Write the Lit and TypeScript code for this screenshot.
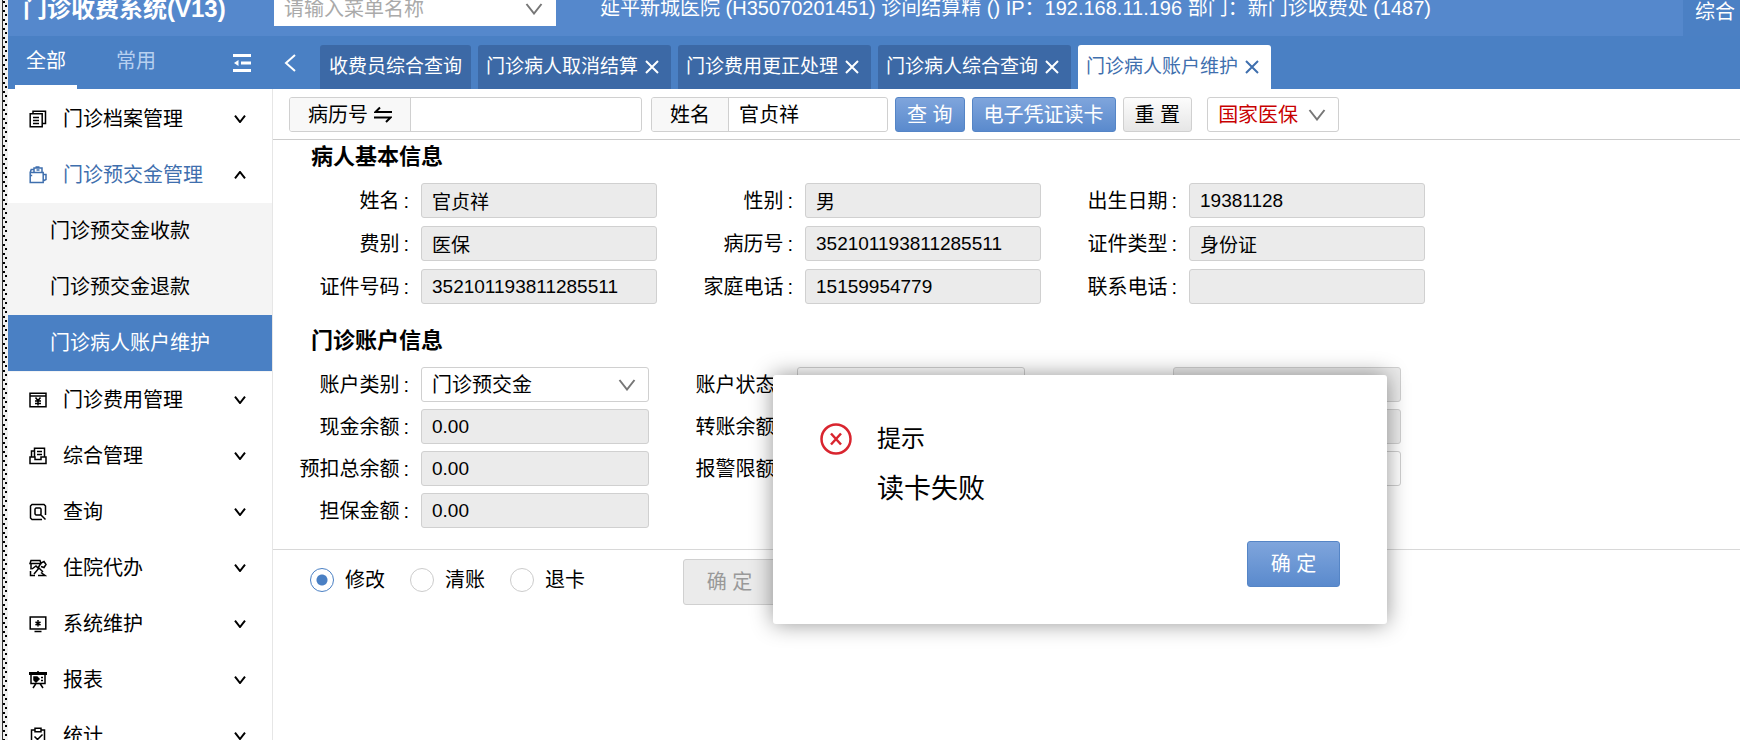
import { LitElement, html, css, svg, nothing } from "lit";
import { customElement, state } from "lit/decorators.js";
import { classMap } from "lit/directives/class-map.js";

const icons: Record<string, unknown> = {
  files: svg`<path d="M4 3.500V1.200h12.500v12.300h-3M1.200 3.800h12v13h-12zM4 7.500h6M4 10.500h6M4 13.500h6"/>`,
  wallet: svg`<path d="M1.200 6.500h13v10h-13zM1.200 6.500l1-3h3M5 6V2h8v4M7.500 4h3M1.200 9.500h2M14 8.500h3v5l-3 1.500M6.500 1h4"/>`,
  fee: svg`<path d="M1 2.200h16v13.600H1zM1 5h16M6.500 6.500l2.500 3 2.500-3M6 10h6M6 12.500h6M9 9.500v5"/>`,
  inbox: svg`<path d="M1 10h5v2.500h6V10h5v6.500H1zM2.500 10V4h3M5.500 10V1.200h10V10M8 4.500h5M8 7.500h5"/>`,
  search: svg`<path d="M13 16.500H3l-1.500-1.500V3L3 1.500h12L16.500 3v9M11 5H7L6 6v5l1 1h4l1-1V6zM12 12l4.500 4.500"/>`,
  agent: svg`<path d="M2 1.500h9l1 3H1zM2 4.500v6M1.500 12v4.500H6M3 10l4-3 2 2 3-5 3-1.500 2 3-2 3-3-1M5 15l5-6 4 4M9 16.500h7l-4-3"/>`,
  monitor: svg`<path d="M1.200 2h15.600v12H1.200zM5.500 16.500h7M9 5v6.500M6.500 7l5 3M11.500 7l-5 3"/>`,
  board: svg`<path d="M0 2.500h18" stroke-width="3"/><path d="M2 3v9.500h14V3M7 12.500l-3 4.500M11 12.500l3 4.500M12 6.500h2M12 9.500h2M9 0v2"/><path fill="currentColor" d="M5 6h3l2 2-3 3-2-2z"/>`,
  clipboard: svg`<path d="M6 3H2.500v14h13V3H12M6 1.300h6v3.400H6zM5.500 9.500l3 3 5-5"/>`,
};

const menus = [
  { icon: "files", label: "门诊档案管理" },
  {
    icon: "wallet",
    label: "门诊预交金管理",
    children: ["门诊预交金收款", "门诊预交金退款", "门诊病人账户维护"],
  },
  { icon: "fee", label: "门诊费用管理" },
  { icon: "inbox", label: "综合管理" },
  { icon: "search", label: "查询" },
  { icon: "agent", label: "住院代办" },
  { icon: "monitor", label: "系统维护" },
  { icon: "board", label: "报表" },
  { icon: "clipboard", label: "统计" },
];

const tabs = ["收费员综合查询", "门诊病人取消结算", "门诊费用更正处理", "门诊病人综合查询", "门诊病人账户维护"];

const patient: [string, string][] = [
  ["姓名", "官贞祥"],
  ["性别", "男"],
  ["出生日期", "19381128"],
  ["费别", "医保"],
  ["病历号", "352101193811285511"],
  ["证件类型", "身份证"],
  ["证件号码", "352101193811285511"],
  ["家庭电话", "15159954779"],
  ["联系电话", ""],
];

const chevron = (cls: string) => html`<svg class="chev ${cls}" viewBox="0 0 18 12" aria-hidden="true">
  <path d="M1.500 1L9 10.500 16.500 1" />
</svg>`;

@customElement("app-root")
export class AppRoot extends LitElement {
  static styles = css`
    :host {
      display: flex;
      height: 100vh;
      overflow: hidden;
      background: #fff;
      color: #000;
      font: 20px/28px "Liberation Sans", "Noto Sans CJK SC", sans-serif;
    }
    * { box-sizing: border-box; }
    button, input, select { font: inherit; color: inherit; margin: 0; border-radius: 3px; }
    button { border: 0; padding: 0; background: none; white-space: nowrap; cursor: pointer; }
    a { color: inherit; text-decoration: none; white-space: nowrap; }
    svg { fill: none; stroke: currentColor; flex: none; }
    .strip {
      flex: none;
      width: 8px;
      border-left: 2px solid #eee;
      background:
        linear-gradient(#333, #333) 0 0 / 1px 100% no-repeat,
        radial-gradient(circle at 2px 2px, #000 1px, transparent 1px) 0 0 / 6px 9px,
        radial-gradient(circle at 4px 6px, #000 1px, transparent 1px) 0 0 / 6px 9px,
        #f0f0f0;
    }
    .app { flex: 1; min-width: 0; display: flex; flex-direction: column; }

    .header {
      flex: none;
      display: flex;
      align-items: flex-end;
      height: 36px;
      background: #5588cc;
      color: #fff;
      white-space: nowrap;
    }
    .title { width: 266px; margin: 0 0 10px; padding-left: 15px; font-size: 24px; line-height: 35px; font-weight: 700; }
    .pick { display: grid; align-items: center; }
    .pick > * { grid-area: 1 / 1; }
    .pick select {
      appearance: none;
      width: 100%;
      height: 35px;
      padding: 0 10px;
      border: 1px solid #d0d0d0;
      background: #fff;
    }
    .chev { width: 18px; height: 12px; color: #777; stroke-width: 2; justify-self: end; margin-right: 13px; pointer-events: none; }
    .find { width: 282px; margin-bottom: 10px; color: #aaa; }
    .find select { border: 0; border-radius: 0; }
    .info { margin: 0 auto 10px 44px; line-height: 35px; }
    .mode { width: 57px; height: 48px; padding-left: 12px; border-radius: 0; background: #4b80c4; text-align: left; overflow: hidden; }

    .nav { flex: none; display: flex; height: 53px; background: #4a80c4; color: #fff; }
    .scope { flex: none; display: flex; align-items: stretch; width: 266px; padding-left: 7px; }
    .scope button { width: 62px; border-radius: 0; margin-right: 28px; border-bottom: 4px solid transparent; color: #b7d0f0; }
    .scope .on { border-color: #fff; color: #fff; }
    .fold { width: 18px; height: 18px; margin: 18px 0 0 38px; stroke-width: 3; }
    .back { flex: none; width: 12px; height: 18px; margin: 18px 24px 0 10px; stroke-width: 2; }
    .tabs { display: flex; gap: 7px; padding-top: 9px; min-width: 0; }
    .tab {
      display: flex;
      align-items: center;
      gap: 7px;
      padding: 0 12px 0 8px;
      border-radius: 3px 3px 0 0;
      background: #3c69a6;
      font-size: 19px;
    }
    .tab:first-child { padding: 0 9px; }
    .tab.on { background: #fff; color: #3f6fae; }
    .tab button { display: flex; color: inherit; }
    .cross { width: 14px; height: 16px; stroke-width: 2; }

    .body { flex: 1; display: flex; min-height: 0; }
    .side { flex: none; width: 265px; padding-top: 2px; border-right: 1px solid #e6e6e6; overflow: hidden; }
    .item { display: flex; align-items: center; width: 100%; height: 56px; padding: 0 26px 0 21px; text-align: left; }
    .item svg { width: 18px; height: 18px; stroke-width: 1.500; }
    .item span { flex: 1; padding-left: 16px; }
    .item .chev { width: 12px; height: 8px; margin: 0; color: #000; stroke-width: 3; }
    .item .up { transform: scaleY(-1); }
    .open { color: #3f6fae; }
    .sub { padding-bottom: 1px; background: #f4f4f4; }
    .sub a { display: flex; align-items: center; height: 56px; padding-left: 42px; }
    .sub .on { background: #4a80c4; color: #fff; }

    .main { flex: 1; min-width: 0; position: relative; }
    .bar { display: flex; align-items: center; gap: 7px; padding: 8px 16px 7px; border-bottom: 1px solid #ccc; }
    .group { display: flex; height: 35px; border: 1px solid #d0d0d0; border-radius: 3px; overflow: hidden; }
    .group:first-child { margin-right: 2px; }
    .group label { display: flex; align-items: center; gap: 6px; padding: 0 18px; border-right: 1px solid #d0d0d0; background: #f8f8f8; white-space: nowrap; }
    .group input { width: 158px; border: 0; padding: 0 10px; background: #fff; }
    .group .wide { width: 230px; }
    .swap { width: 18px; height: 18px; stroke-width: 2; }
    .btn { height: 35px; padding: 0 11px; border: 1px solid #d0d0d0; border-radius: 3px; background: linear-gradient(#fcfcfc, #e6e6e6); }
    .primary { border-color: #5585c6; background: linear-gradient(#7fa5dc, #5a8acd); color: #fff; }
    .big { height: 46px; min-width: 93px; padding: 0 20px; }
    .big:disabled { background: #ebebeb; color: #999; cursor: default; }
    .insure { width: 132px; margin-left: 8px; color: #c80000; }

    h2 { margin: 0; padding-left: 38px; font-size: 22px; line-height: 30px; font-weight: 700; }
    .form {
      display: grid;
      grid-template-columns: repeat(3, 148px minmax(120px, var(--field)));
      align-items: center;
    }
    .bar + h2 { padding-top: 2px; }
    .patient { --field: 236px; row-gap: 8px; padding: 11px 0 22px; }
    .account { --field: 228px; row-gap: 7px; padding: 11px 0 21px; border-bottom: 1px solid #d8d8d8; }
    .form > label { padding-right: 12px; text-align: right; white-space: nowrap; }
    .form > label::after { content: ":"; margin-left: 4px; }
    .form input { width: 100%; min-width: 0; height: 35px; padding: 0 10px; border: 1px solid #d0d0d0; background: #ebebeb; font-size: 19px; }
    .form .edit { background: #fff; }

    .foot { display: flex; align-items: flex-start; padding: 9px 37px; }
    .foot label { display: flex; align-items: center; gap: 11px; height: 42px; margin-right: 25px; white-space: nowrap; }
    .foot input {
      appearance: none;
      width: 24px;
      height: 24px;
      border: 1px solid #ccc;
      border-radius: 50%;
      background: #fff;
    }
    .foot input:checked { border-color: #4a80c4; background: radial-gradient(circle, #4a80c4 5px, #fff 6px); }
    .foot .btn { margin-left: 73px; }

    .dialog {
      position: absolute;
      top: 286px;
      left: 500px;
      display: grid;
      grid-template-columns: 32px 1fr;
      column-gap: 25px;
      width: 614px;
      max-width: 100%;
      padding: 46px 47px 37px;
      border-radius: 3px;
      background: #fff;
      box-shadow: 0 0 22px rgba(0, 0, 0, 0.42);
    }
    .dialog h3 { margin: 0; font-size: 24px; line-height: 36px; font-weight: 400; }
    .dialog p { grid-column: 2; margin: 12px 0 32px; font-size: 27px; line-height: 40px; }
    .dialog .btn { grid-column: 2; justify-self: end; }
    .error { width: 32px; height: 32px; align-self: center; color: #d9252f; stroke-width: 2.500; }
  `;

  @state() private active = 4;
  @state() private showDialog = true;
  @state() private action = "修改";

  private cross() {
    return html`<svg class="cross" viewBox="0 0 14 16"><path d="M1 2l12 12M13 2L1 14" /></svg>`;
  }

  private field(label: string, value: string, i: number) {
    return html`<label for="p${i}">${label}</label><input id="p${i}" readonly .value=${value} />`;
  }

  private money(id: string, label: string) {
    return html`<label for=${id}>${label}</label><input id=${id} readonly .value=${"0.00"} />`;
  }

  render() {
    return html`
      <div class="strip"></div>
      <div class="app">
        <header class="header">
          <h1 class="title">门诊收费系统(V13)</h1>
          <div class="pick find">
            <select aria-label="请输入菜单名称"><option>请输入菜单名称</option></select>
            ${chevron("")}
          </div>
          <div class="info">延平新城医院 (H35070201451) 诊间结算精 () IP：192.168.11.196 部门：新门诊收费处 (1487)</div>
          <button class="mode">综合</button>
        </header>
        <nav class="nav">
          <div class="scope">
            <button class="on">全部</button><button>常用</button>
            <svg class="fold" viewBox="0 0 18 18"><path d="M0 1.500h18M8 9h10M0 16.500h18" /><path d="M5.500 6v6L1 9z" stroke="none" fill="currentColor" /></svg>
          </div>
          <svg class="back" viewBox="0 0 12 18"><path d="M11 1L2 9l9 8" /></svg>
          <div class="tabs">
            ${tabs.map(
              (t, i) => html`<div class=${classMap({ tab: true, on: i === this.active })}>
                <a href="#" @click=${() => (this.active = i)}>${t}</a>
                ${i ? html`<button aria-label="关闭">${this.cross()}</button>` : nothing}
              </div>`
            )}
          </div>
        </nav>
        <div class="body">
          <aside class="side">
            ${menus.map(
              (m) => html`<button class=${classMap({ item: true, open: !!m.children })}>
                  <svg viewBox="0 0 18 18">${icons[m.icon]}</svg><span>${m.label}</span>${chevron(m.children ? "up" : "")}
                </button>
                ${m.children
                  ? html`<div class="sub">${m.children.map((c, i) => html`<a href="#" class=${i === 2 ? "on" : ""}>${c}</a>`)}</div>`
                  : nothing}`
            )}
          </aside>
          <main class="main">
            <div class="bar">
              <div class="group">
                <label for="record">病历号
                  <svg class="swap" viewBox="0 0 18 18"><path d="M6 1.500L1.500 6H18M0 11.500h16.500L12 16" /></svg>
                </label>
                <input id="record" class="wide" />
              </div>
              <div class="group"><label for="name">姓名</label><input id="name" .value=${"官贞祥"} /></div>
              <button class="btn primary">查 询</button>
              <button class="btn primary">电子凭证读卡</button>
              <button class="btn">重 置</button>
              <div class="pick insure">
                <select aria-label="医保类型"><option>国家医保</option></select>
                ${chevron("")}
              </div>
            </div>
            <h2>病人基本信息</h2>
            <div class="form patient">${patient.map(([l, v], i) => this.field(l, v, i))}</div>
            <h2>门诊账户信息</h2>
            <div class="form account">
              <label for="kind">账户类别</label>
              <div class="pick">
                <select id="kind"><option>门诊预交金</option></select>
                ${chevron("")}
              </div>
              <label for="status">账户状态</label><input id="status" class="edit" />
              <span></span><input aria-label="开户日期" readonly />
              ${this.money("cash", "现金余额")}
              <label for="transfer">转账余额</label><input id="transfer" readonly />
              <span></span><input aria-label="账户余额" readonly />
              ${this.money("hold", "预扣总余额")}
              <label for="alarm">报警限额</label><input id="alarm" class="edit" />
              <span></span><input aria-label="备注" class="edit" />
              ${this.money("bond", "担保金额")}
            </div>
            <div class="foot">
              ${["修改", "清账", "退卡"].map(
                (a) => html`<label
                  ><input type="radio" name="action" .checked=${a === this.action} @change=${() => (this.action = a)} />${a}</label
                >`
              )}
              <button class="btn big" disabled>确 定</button>
            </div>
            ${this.showDialog
              ? html`<section class="dialog" role="alertdialog" aria-labelledby="dt" aria-describedby="dm">
                  <svg class="error" viewBox="0 0 32 32"><circle cx="16" cy="16" r="14.500" /><path d="M11 10.500l10 11M21 10.500l-10 11" /></svg>
                  <h3 id="dt">提示</h3>
                  <p id="dm">读卡失败</p>
                  <button class="btn primary big" @click=${() => (this.showDialog = false)}>确 定</button>
                </section>`
              : nothing}
          </main>
        </div>
      </div>
    `;
  }
}
